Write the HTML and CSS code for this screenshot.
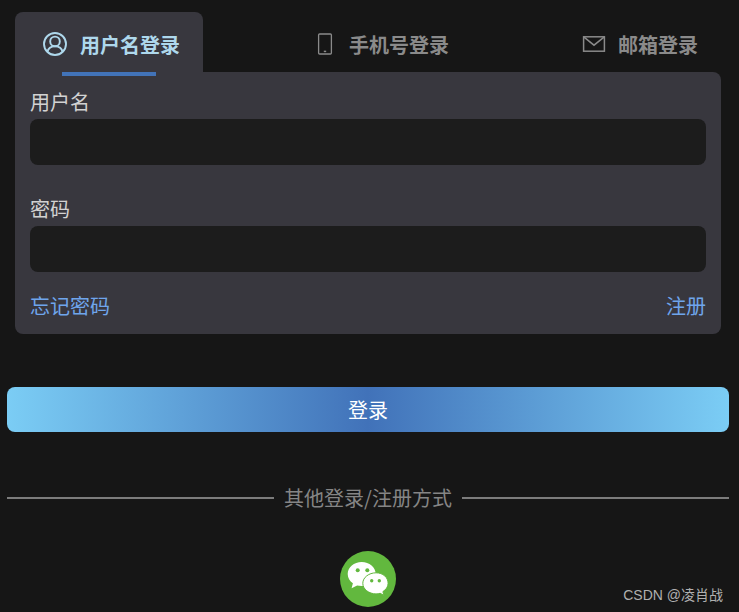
FILE: index.html
```html
<!DOCTYPE html>
<html lang="zh-CN">
<head>
    <meta charset="UTF-8">
    <title>登录</title>
    <link rel="stylesheet" href="styles.css">
</head>
<body>
    <div class="login">
        <div class="tabs">
            <div class="tab active">
                <svg class="tab-icon" viewBox="0 0 24 24" fill="none" stroke="currentColor" stroke-width="1.9">
                    <circle cx="12" cy="12" r="11"/>
                    <circle cx="12" cy="9.4" r="4.8"/>
                    <path d="M4.4 20c.8-3.800 3.600-5.800 7.600-5.800s6.800 2 7.600 5.800"/>
                </svg>
                <span>用户名登录</span>
            </div>
            <div class="tab">
                <svg class="tab-icon" viewBox="0 0 24 24" fill="none" stroke="currentColor" stroke-width="1.3">
                    <rect x="5.6" y="2" width="12.8" height="20" rx="1"/>
                    <path d="M10.800 19.400h2.400" stroke-width="1.500"/>
                </svg>
                <span>手机号登录</span>
            </div>
            <div class="tab">
                <svg class="tab-icon" viewBox="0 0 24 24" fill="none" stroke="currentColor" stroke-width="1.500">
                    <rect x="1.600" y="4.800" width="20.800" height="14.400"/>
                    <path d="M2 5.200l10 8 10-8"/>
                </svg>
                <span>邮箱登录</span>
            </div>
        </div>
        <div class="panel">
            <div class="field">
                <label class="field-label">用户名</label>
                <input class="field-input" type="text">
            </div>
            <div class="field">
                <label class="field-label">密码</label>
                <input class="field-input" type="password">
            </div>
            <div class="links">
                <a class="link">忘记密码</a>
                <a class="link">注册</a>
            </div>
        </div>
    </div>

    <button class="submit">登录</button>

    <div class="divider">其他登录/注册方式</div>

    <div class="socials">
        <svg class="wechat" viewBox="0 0 56 56">
            <circle cx="28" cy="28" r="28" fill="#62b83e"/>
            <path d="M21.700 11c-7.700 0-14 5.400-14 12 0 3.800 2 7.100 5.200 9.300l-1.300 5 5.500-2.800c1.400.3 3 .5 4.600.5 7.700 0 14-5.400 14-12s-6.300-12-14-12z" fill="#fff"/>
            <path d="M36 21.800c-7 0-13.200 4.600-13.200 10.500S29 42.900 36 42.900c1.500 0 2.900-.2 4.200-.6l3.700 2.100-1-3.800c3-1.900 5.200-4.700 5.200-8.300 0-5.900-5.100-10.500-12.100-10.500z" fill="#fff" stroke="#62b83e" stroke-width="1"/>
            <circle cx="17.700" cy="19.300" r="2" fill="#62b83e"/>
            <circle cx="27.300" cy="19.300" r="2" fill="#62b83e"/>
            <circle cx="31.700" cy="29.700" r="1.700" fill="#62b83e"/>
            <circle cx="39.300" cy="29.700" r="1.700" fill="#62b83e"/>
        </svg>
    </div>

    <div class="watermark">CSDN @凌肖战</div>
</body>
</html>
```

FILE: styles.css
```css
:root {
    --page-bg: #161616;
    --panel-bg: #38373e;
    --input-bg: #1c1c1c;
    --link-color: #6fa5ec;
    --muted: #8a8a8a;
}

html, body {
    height: 100%;
}

body {
    margin: 0;
    padding: 12px 10px 0 7px;
    box-sizing: border-box;
    overflow: hidden;
    position: relative;
    background: var(--page-bg);
    color: #d0d0d0;
    font-family: "Liberation Sans", "Noto Sans CJK SC", sans-serif;
}

.login {
    margin: 0 8px;
    width: 706px;
}

.tabs {
    display: flex;
    justify-content: space-between;
    height: 60px;
}

.tab {
    position: relative;
    display: flex;
    align-items: center;
    gap: 12px;
    width: 187px;
    box-sizing: border-box;
    padding: 4px 23px 0 28px;
    border-radius: 8px 8px 0 0;
    color: var(--muted);
    font-size: 20px;
    font-weight: 700;
    white-space: nowrap;
}

.tab:last-child {
    width: 167px;
}

.tab-icon {
    width: 24px;
    height: 24px;
    flex: none;
    margin-top: -1px;
}

.tab.active {
    width: 188px;
    gap: 13px;
    background: var(--panel-bg);
    color: #aed8ec;
}

.tab.active::after {
    content: "";
    position: absolute;
    left: 47px;
    bottom: -4px;
    width: 94px;
    height: 4px;
    background: #4273b8;
    z-index: 1;
}

.panel {
    background: var(--panel-bg);
    border-radius: 0 8px 8px 8px;
    padding: 16px 15px 14px;
    height: 262px;
    box-sizing: border-box;
}

.field {
    margin-bottom: 30px;
}

.field-label {
    display: block;
    height: 31px;
    line-height: 30px;
    font-size: 20px;
    color: #d2d2d2;
}

.field-input {
    display: block;
    width: 100%;
    height: 46px;
    box-sizing: border-box;
    border: none;
    border-radius: 8px;
    background: var(--input-bg);
}

.links {
    display: flex;
    justify-content: space-between;
    margin-top: -10px;
    font-size: 20px;
    line-height: 30px;
}

.link {
    color: var(--link-color);
}

.submit {
    display: block;
    width: 722px;
    height: 45px;
    margin: 53px 0 0;
    border: none;
    border-radius: 8px;
    background: linear-gradient(90deg, #7bcdf5, #4172b9 50%, #7bcdf5);
    color: #fff;
    font-family: inherit;
    font-size: 20px;
}

.divider {
    display: flex;
    align-items: center;
    gap: 10px;
    width: 722px;
    margin-top: 51px;
    line-height: 30px;
    font-family: "Noto Sans CJK SC", sans-serif;
    font-size: 20px;
    color: #858585;
}

.divider::before,
.divider::after {
    content: "";
    flex: 1;
    height: 2px;
    background: #7c7c7c;
}

.socials {
    display: flex;
    justify-content: center;
    width: 722px;
    margin-top: 38px;
}

.wechat {
    width: 56px;
    height: 56px;
}

.watermark {
    position: absolute;
    right: 16px;
    bottom: 7px;
    font-size: 14px;
    line-height: 20px;
    color: #b0b0b0;
}
```
